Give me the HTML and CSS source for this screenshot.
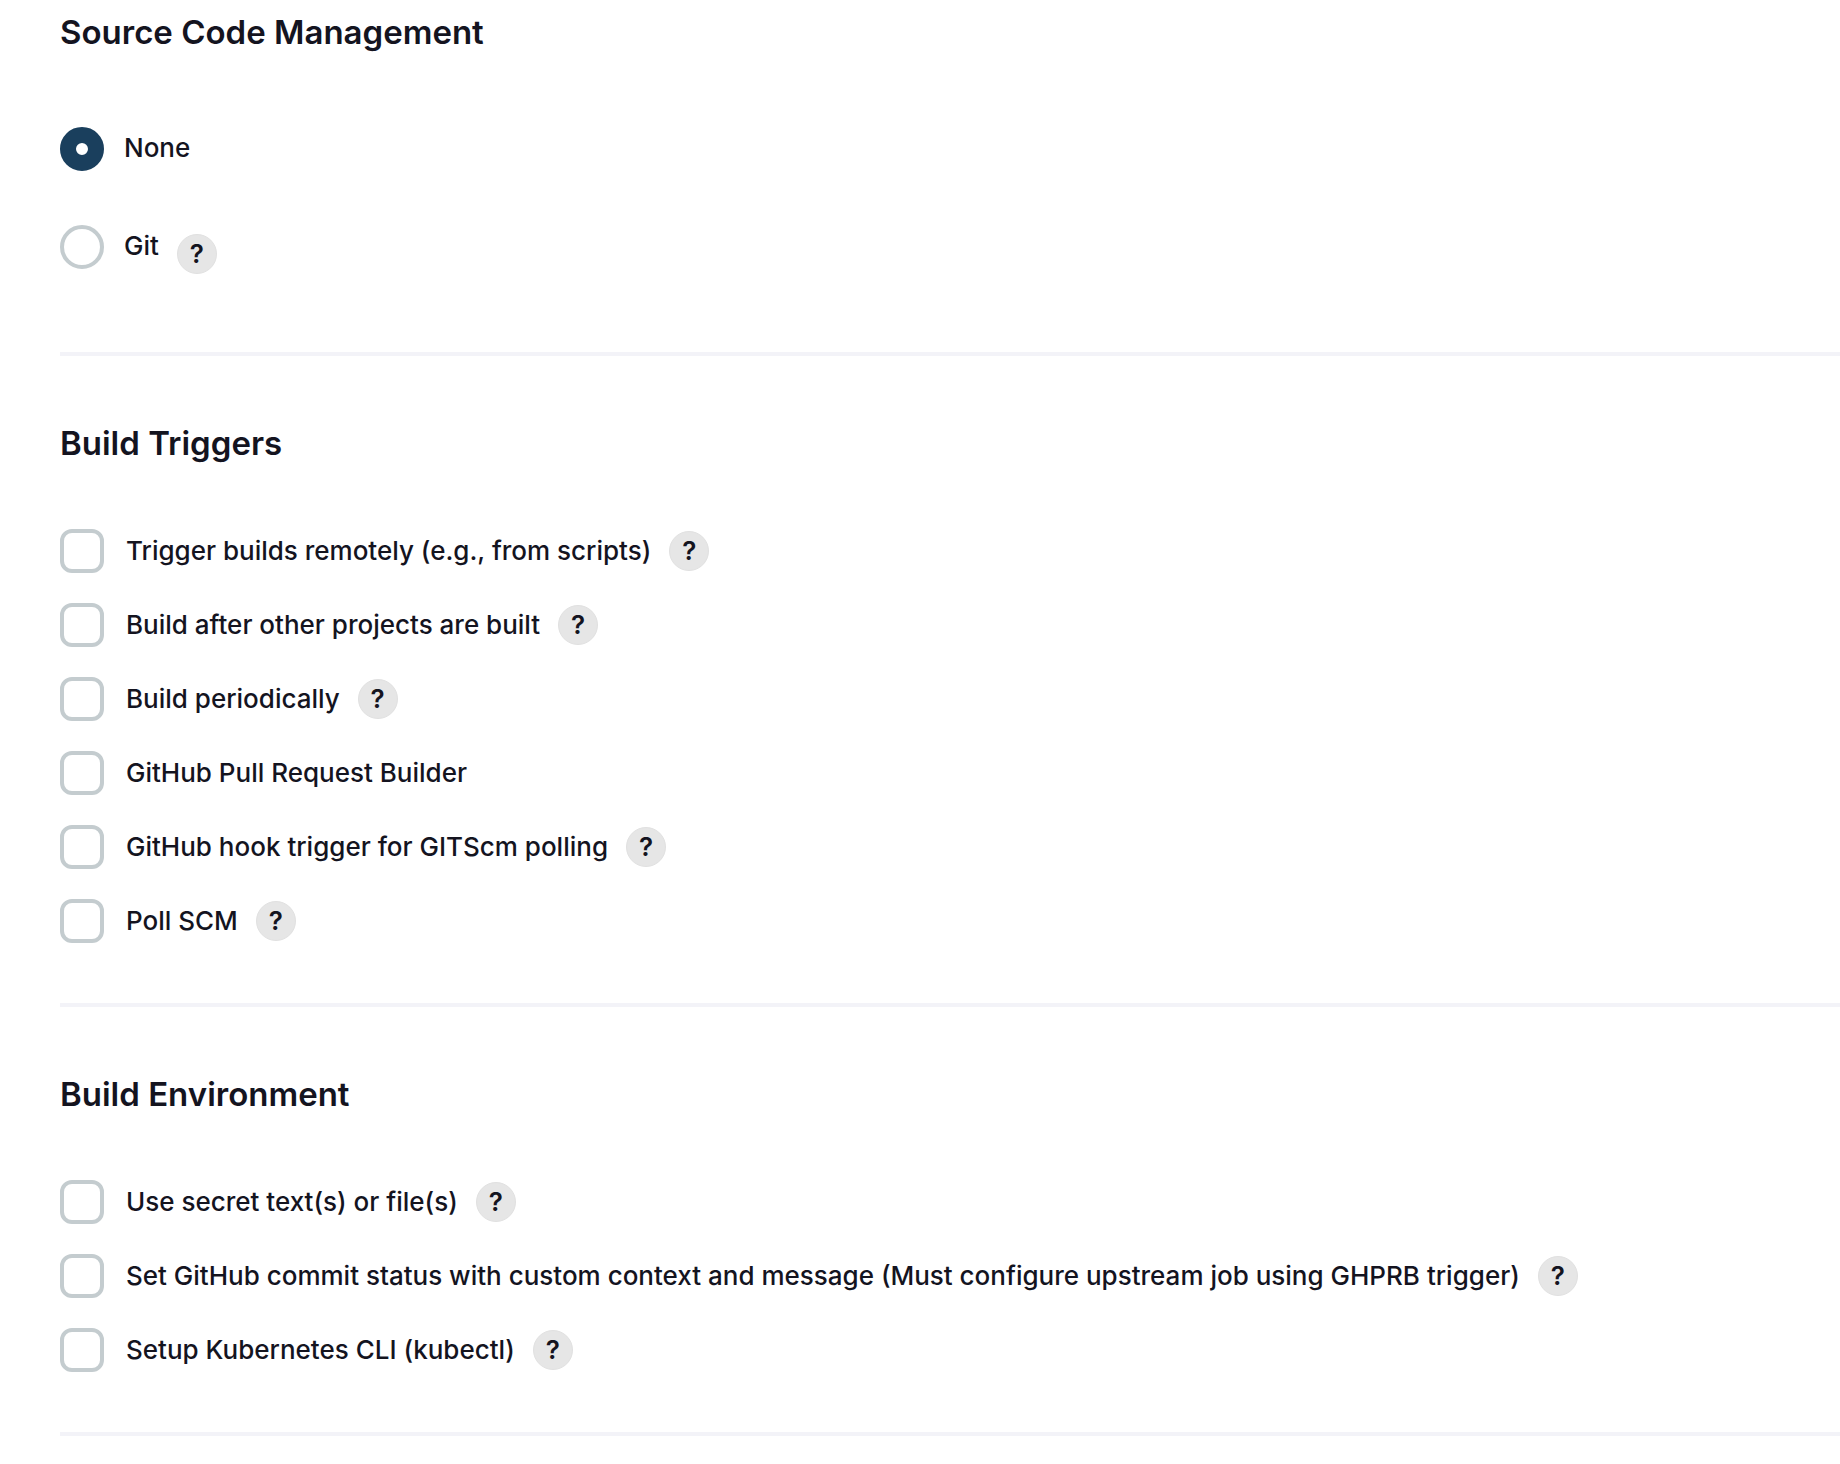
FILE: index.html
```html
<!DOCTYPE html>
<html lang="en">
<head>
<meta charset="utf-8">
<meta name="viewport" content="width=device-width, initial-scale=1">
<title>Project configuration</title>
<link rel="stylesheet" href="styles.css">
</head>
<body>
<form class="config">
  <section class="section">
    <h2 class="section-title">Source Code Management</h2>
    <div class="options options-radio">
      <div class="option">
        <input class="control radio" type="radio" name="scm" id="scm-none" checked>
        <label class="label" for="scm-none">None</label>
      </div>
      <div class="option">
        <input class="control radio" type="radio" name="scm" id="scm-git">
        <label class="label" for="scm-git">Git</label>
        <button class="help" type="button">?</button>
      </div>
    </div>
  </section>

  <section class="section">
    <h2 class="section-title">Build Triggers</h2>
    <div class="options">
      <div class="option">
        <input class="control checkbox" type="checkbox" id="remote">
        <label class="label" for="remote">Trigger builds remotely (e.g., from scripts)</label>
        <button class="help" type="button">?</button>
      </div>
      <div class="option">
        <input class="control checkbox" type="checkbox" id="after">
        <label class="label" for="after">Build after other projects are built</label>
        <button class="help" type="button">?</button>
      </div>
      <div class="option">
        <input class="control checkbox" type="checkbox" id="periodic">
        <label class="label" for="periodic">Build periodically</label>
        <button class="help" type="button">?</button>
      </div>
      <div class="option">
        <input class="control checkbox" type="checkbox" id="ghprb">
        <label class="label" for="ghprb">GitHub Pull Request Builder</label>
      </div>
      <div class="option">
        <input class="control checkbox" type="checkbox" id="hook">
        <label class="label" for="hook">GitHub hook trigger for GITScm polling</label>
        <button class="help" type="button">?</button>
      </div>
      <div class="option">
        <input class="control checkbox" type="checkbox" id="poll">
        <label class="label" for="poll">Poll SCM</label>
        <button class="help" type="button">?</button>
      </div>
    </div>
  </section>

  <section class="section">
    <h2 class="section-title">Build Environment</h2>
    <div class="options">
      <div class="option">
        <input class="control checkbox" type="checkbox" id="secret">
        <label class="label" for="secret">Use secret text(s) or file(s)</label>
        <button class="help" type="button">?</button>
      </div>
      <div class="option">
        <input class="control checkbox" type="checkbox" id="status">
        <label class="label" for="status">Set GitHub commit status with custom context and message (Must configure upstream job using GHPRB trigger)</label>
        <button class="help" type="button">?</button>
      </div>
      <div class="option">
        <input class="control checkbox" type="checkbox" id="kubectl">
        <label class="label" for="kubectl">Setup Kubernetes CLI (kubectl)</label>
        <button class="help" type="button">?</button>
      </div>
    </div>
  </section>
</form>
</body>
</html>
```
FILE: styles.css
```css
* {
  box-sizing: border-box;
}

body {
  margin: 0;
  background: #fff;
  color: #14141f;
  font-family: Inter, "Liberation Sans", sans-serif;
  font-size: 26px;
  font-weight: 500;
  line-height: 44px;
}

.config {
  padding-left: 60px;
}

.section {
  padding: 65px 0 60px;
  border-bottom: 4px solid #f3f3f8;
}

.section:first-child {
  padding: 10px 0 83px;
}

.section-title {
  margin: 0 0 64px;
  font-size: 33px;
  font-weight: 600;
  line-height: 44px;
}

.section:first-child .section-title {
  margin-bottom: 73px;
}

.options {
  display: flex;
  flex-direction: column;
  gap: 30px;
}

.options-radio {
  gap: 54px;
}

.option {
  display: flex;
  align-items: center;
  min-height: 44px;
}

.control {
  appearance: none;
  flex: none;
  width: 44px;
  height: 44px;
  margin: 0;
  border: 4px solid #c4cccf;
  background: #fff;
}

.radio {
  border-radius: 50%;
}

.radio:checked {
  border: 16px solid #1a3f5d;
}

.checkbox {
  border-radius: 12px;
}

.label {
  padding-left: 22px;
}

.options-radio .label {
  padding: 0 0 2px 20px;
}

.help {
  flex: none;
  width: 40px;
  height: 40px;
  margin: 0 0 0 18px;
  padding: 0;
  border: 1px solid #e1e1e1;
  border-radius: 50%;
  background: #e6e6e6;
  color: inherit;
  font: 600 26px/38px Inter, "Liberation Sans", sans-serif;
  text-align: center;
}

.options-radio .option {
  height: 44px;
}

.options-radio .help {
  align-self: flex-start;
  margin-top: 9px;
}
```
